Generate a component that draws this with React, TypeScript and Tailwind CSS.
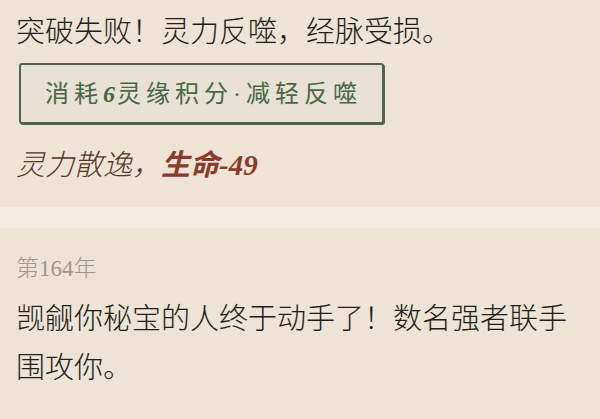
export default function App() {
  const font = { fontFamily: '"Liberation Serif", "Noto Sans CJK SC", serif' };
  return (
    <div className="w-[600px] h-[419px] overflow-hidden bg-[#ede4d5] text-[#221d19] font-light" style={font}>
      {/* event result */}
      <div className="pl-4 pt-3 pb-[22px]">
        <p className="text-[29px] leading-[40px]">突破失败！灵力反噬，经脉受损。</p>
        <button
          type="button"
          className="mt-[11px] ml-[3px] flex h-[61px] w-[365px] items-center justify-center rounded-[3px] border-2 border-[#4f6649] bg-[#e8e1d4] pl-[4px] text-[24px] font-normal tracking-[5px] text-[#476842] shadow-[1px_1px_0_#4f6649]"
        >
          消耗<span className="tracking-[2px] italic font-bold">6</span>灵缘积分·减轻反噬
        </button>
        <p className="mt-[21px] text-[29px] italic leading-[40px] text-[#553629]">
          灵力散逸，<span className="font-bold text-[#8a3b2a]">生命-49</span>
        </p>
      </div>

      <div className="h-[21px] bg-[#f3ebdf]" />

      {/* next year */}
      <div className="pl-4 pr-5 pt-[26px]">
        <p className="text-[23px] leading-[30px] text-[#a0978a]">第164年</p>
        <p className="mt-[11px] text-[29px] leading-[49px]">
          觊觎你秘宝的人终于动手了！数名强者联手围攻你。
        </p>
      </div>
    </div>
  );
}
